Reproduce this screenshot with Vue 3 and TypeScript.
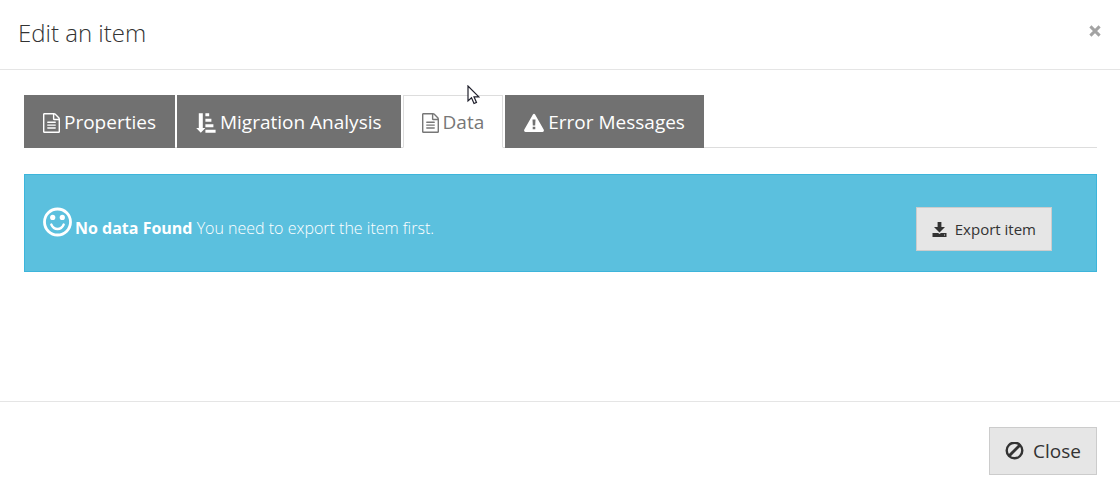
<script setup lang="ts">
import { ref } from 'vue'

type Icon = 'file' | 'sort' | 'warning'
interface Tab {
  id: string
  label: string
  icon: Icon
}

const tabs: Tab[] = [
  { id: 'properties', label: 'Properties', icon: 'file' },
  { id: 'migration', label: 'Migration Analysis', icon: 'sort' },
  { id: 'data', label: 'Data', icon: 'file' },
  { id: 'errors', label: 'Error Messages', icon: 'warning' },
]
const active = ref('data')
</script>

<template>
  <section class="dialog" role="dialog" aria-labelledby="dialog-title">
    <header class="head">
      <h1 id="dialog-title" class="title">Edit an item</h1>
      <button class="dismiss" type="button" aria-label="Dismiss">
        <svg width="12" height="12" viewBox="0 0 12 12">
          <path d="M1.4 1.4 10.6 10.6M10.6 1.4 1.4 10.6" stroke="currentColor" stroke-width="3" />
        </svg>
      </button>
    </header>

    <div class="body">
      <div class="tabs" role="tablist">
        <button
          v-for="tab in tabs"
          :key="tab.id"
          class="tab"
          :class="{ active: tab.id === active }"
          type="button"
          role="tab"
          :aria-selected="tab.id === active"
          @click="active = tab.id"
        >
          <svg v-if="tab.icon === 'file'" width="17" height="20" viewBox="0 0 1536 1792" fill="currentColor">
            <path d="M1468 380q28 28 48 76t20 88v1152q0 40-28 68t-68 28h-1344q-40 0-68-28t-28-68v-1600q0-40 28-68t68-28h896q40 0 88 20t76 48zm-444-244v376h376q-10-29-22-41l-313-313q-12-12-41-22zm384 1528v-1024h-416q-40 0-68-28t-28-68v-416h-768v1536h1280zm-1024-864q0-14 9-23t23-9h704q14 0 23 9t9 23v64q0 14-9 23t-23 9h-704q-14 0-23-9t-9-23v-64zm736 224q14 0 23 9t9 23v64q0 14-9 23t-23 9h-704q-14 0-23-9t-9-23v-64q0-14 9-23t23-9h704zm0 256q14 0 23 9t9 23v64q0 14-9 23t-23 9h-704q-14 0-23-9t-9-23v-64q0-14 9-23t23-9h704z" />
          </svg>
          <svg v-else-if="tab.icon === 'sort'" width="20" height="20" viewBox="0 0 20 20" fill="currentColor">
            <path d="M2.8.3h4v14.6h2.6L4.8 19.8.2 14.9h2.6zM9.4.3h3.8v3H9.4zM9.4 5.8h6v3h-6zM9.4 11.3h8v3h-8zM9.4 16.8h10.2v3H9.4z" />
          </svg>
          <svg v-else width="20" height="20" viewBox="0 0 20 20" fill="currentColor">
            <path fill-rule="evenodd" d="M8.9 1.4Q10 0 11.1 1.4L19.8 16.8Q20.3 18.8 18.6 19H1.4Q-.3 18.8.2 16.8ZM8.5 6.4 8.8 12.4H11.2L11.5 6.4ZM8.7 13.8V16.3H11.3V13.8Z" />
          </svg>
          <span>{{ tab.label }}</span>
        </button>
      </div>

      <div class="notice" role="status">
        <svg class="smile" width="30" height="30" viewBox="0 0 30 30" fill="none" stroke="currentColor">
          <circle cx="14.5" cy="15" r="13" stroke-width="2.8" />
          <circle cx="9.7" cy="10.4" r="2.6" fill="currentColor" stroke="none" />
          <circle cx="19.3" cy="10.4" r="2.6" fill="currentColor" stroke="none" />
          <path d="M8.3 17.5Q10.3 22 14.5 22T20.7 17.5" stroke-width="2.4" stroke-linecap="round" />
        </svg>
        <p class="message"><strong>No data Found</strong> You need to export the item first.</p>
        <button class="btn export" type="button">
          <svg width="15" height="15" viewBox="0 0 15 15" fill="currentColor">
            <path fill-rule="evenodd" d="M5.6 0H9.4V5H13L7.5 10.4 2 5H5.6ZM.5 11H6.1L7.5 12 8.9 11H14.5V15H.5ZM12 12.6V13.6H13V12.6Z" />
          </svg>
          <span>Export item</span>
        </button>
      </div>
    </div>

    <footer class="foot">
      <button class="btn close" type="button">
        <svg width="19" height="19" viewBox="0 0 19 19" fill="none" stroke="currentColor" stroke-width="2.4">
          <circle cx="9.5" cy="8.5" r="7.8" />
          <path d="M4 14 15 3" stroke-width="3" />
        </svg>
        <span>Close</span>
      </button>
    </footer>

    <svg class="pointer" width="13" height="20" viewBox="0 0 13 20" aria-hidden="true">
      <path d="M1 1V16L4.5 12.8 7 18.5 9.5 17.4 7 11.8H11.8Z" fill="#fff" stroke="#20202c" stroke-width="1.2" />
    </svg>
  </section>
</template>

<style>
body {
  margin: 0;
  background: #fff;
}
</style>

<style scoped>
.dialog {
  position: relative;
  font-family: "Open Sans", sans-serif;
  color: #333;
}
button {
  font-family: inherit;
  cursor: pointer;
}
svg {
  display: block;
  flex: none;
}
.head {
  display: flex;
  align-items: center;
  justify-content: space-between;
  padding: 15px 19px 19px 18px;
  border-bottom: 1px solid #e5e5e5;
}
.title {
  margin: 0;
  font-size: 24px;
  line-height: 35px;
  font-weight: 300;
}
.dismiss {
  margin-bottom: 4px;
  padding: 0;
  border: 0;
  background: none;
  color: #a3a3a3;
}
.body {
  min-height: 281px;
  padding: 25px 23px 25px 24px;
}
.tabs {
  display: flex;
  gap: 2px;
  border-bottom: 1px solid #ddd;
}
.tab {
  display: flex;
  align-items: center;
  gap: 4px;
  height: 53px;
  margin-bottom: -1px;
  padding: 2px 18px 0;
  border: 1px solid #717171;
  background: #717171;
  color: #fff;
  font-size: 19px;
  line-height: 27px;
}
.tab.active {
  border-color: #ddd;
  border-bottom-color: #fff;
  background: #fff;
  color: #777;
}
.notice {
  display: flex;
  align-items: center;
  margin-top: 26px;
  padding: 32px 44px 20px 18px;
  border: 1px solid #3db5db;
  background: #5bc0de;
  color: #fff;
}
.smile {
  margin-bottom: 14px;
}
.message {
  flex: 1;
  margin: 0 0 2px 2px;
  font-size: 16px;
  line-height: 24px;
  font-weight: 300;
}
.message strong {
  font-weight: 700;
}
.btn {
  display: flex;
  align-items: center;
  border: 1px solid #ccc;
  background: #e6e6e6;
  color: #333;
}
.export {
  gap: 8px;
  height: 44px;
  padding: 0 15px;
  font-size: 15px;
}
.foot {
  display: flex;
  justify-content: flex-end;
  padding: 25px 23px 19px;
  border-top: 1px solid #e5e5e5;
}
.close {
  gap: 9px;
  height: 48px;
  padding: 0 15px;
  font-size: 19px;
}
.pointer {
  position: absolute;
  left: 467px;
  top: 85px;
}
</style>
